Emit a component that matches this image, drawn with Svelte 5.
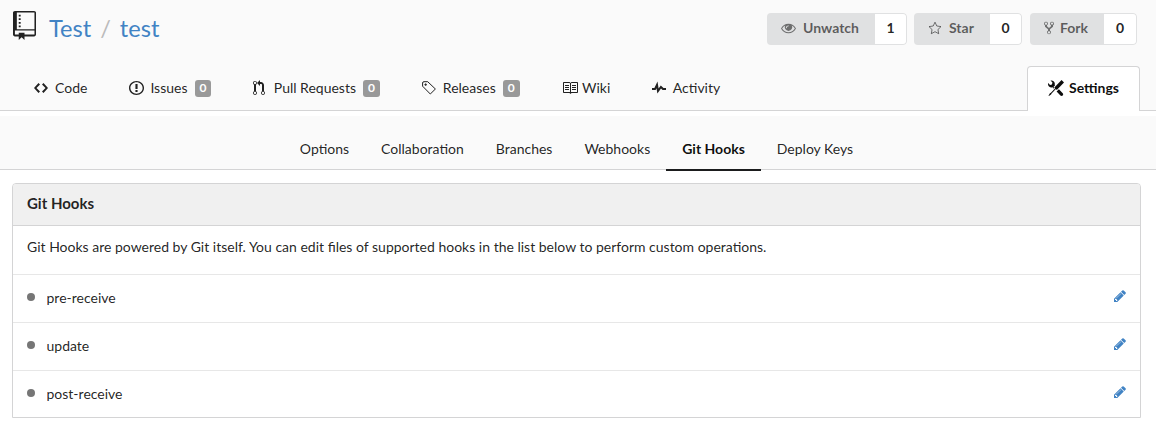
<script>
  const actions = [
    { icon: 'eye', label: 'Unwatch', count: 1, w: 140, cw: 32, iw: 22 },
    { icon: 'star', label: 'Star', count: 0, w: 108, cw: 32, iw: 21 },
    { icon: 'fork', label: 'Fork', count: 0, w: 107, cw: 33, iw: 16 }
  ];
  const tabs = [
    { icon: 'code', label: 'Code' },
    { icon: 'issue', label: 'Issues', count: 0 },
    { icon: 'pull', label: 'Pull Requests', count: 0 },
    { icon: 'tag', label: 'Releases', count: 0 },
    { icon: 'book', label: 'Wiki' },
    { icon: 'pulse', label: 'Activity' }
  ];
  const sections = ['Options', 'Collaboration', 'Branches', 'Webhooks', 'Git Hooks', 'Deploy Keys'];
  const hooks = ['pre-receive', 'update', 'post-receive'];

  const icons = {
    repo: { box: '0 0 12 16', w: 23, h: 29, d: 'M4 9H3V8h1v1zm0-3H3v1h1V6zm0-2H3v1h1V4zm0-2H3v1h1V2zm8-1v12c0 .55-.45 1-1 1H6v2l-1.500-1.500L3 16v-2H1c-.55 0-1-.45-1-1V1c0-.55.45-1 1-1h10c.55 0 1 .45 1 1zm-.8 9.800H1V13h2v-1h3v1h5.200v-2.200zM11.200.8H2V10h9.200V.8z' },
    code: { box: '0 0 14 16', w: 14, h: 16, d: 'M9.500 3L8 4.500 11.500 8 8 11.500 9.500 13 14 8 9.500 3zm-5 0L0 8l4.500 5L6 11.500 2.500 8 6 4.500 4.500 3z' },
    issue: { box: '0 0 14 16', w: 15, h: 16, d: 'M7 2.300c3.140 0 5.700 2.560 5.700 5.700s-2.560 5.700-5.700 5.700A5.710 5.710 0 0 1 1.300 8c0-3.140 2.560-5.700 5.700-5.700zM7 1C3.140 1 0 4.140 0 8s3.140 7 7 7 7-3.140 7-7-3.140-7-7-7zm1 3H6v5h2V4zm0 6H6v2h2v-2z' },
    pull: { box: '0 0 12 16', w: 12, h: 16, d: 'M11 11.280V5c-.03-.78-.34-1.470-.94-2.060C9.460 2.350 8.780 2.030 8 2H7V0L4 3l3 3V4h1c.27.02.48.11.69.31.21.2.3.42.31.69v6.280A1.993 1.993 0 0 0 10 15a1.993 1.993 0 0 0 1-3.720zm-1 2.920c-.66 0-1.200-.55-1.200-1.200 0-.65.55-1.200 1.200-1.200.65 0 1.200.55 1.200 1.200 0 .65-.55 1.200-1.200 1.200zM4 3c0-1.110-.89-2-2-2a1.993 1.993 0 0 0-1 3.720v6.560A1.993 1.993 0 0 0 2 15a1.993 1.993 0 0 0 1-3.720V4.720c.59-.34 1-.98 1-1.720zm-.8 10c0 .66-.55 1.200-1.200 1.200-.65 0-1.200-.55-1.200-1.200 0-.65.55-1.200 1.200-1.200.65 0 1.200.55 1.200 1.200zM2 4.200C1.340 4.200.8 3.650.8 3c0-.65.55-1.200 1.200-1.200.65 0 1.200.55 1.200 1.200 0 .65-.55 1.200-1.200 1.200z' },
    book: { box: '0 0 16 16', w: 16, h: 16, d: 'M3 5h4v1H3V5zm0 3h4V7H3v1zm0 2h4V9H3v1zm11-5h-4v1h4V5zm0 2h-4v1h4V7zm0 2h-4v1h4V9zm2-6v9c0 .55-.45 1-1 1H9.500l-1 1-1-1H2c-.55 0-1-.45-1-1V3c0-.55.45-1 1-1h5.500l1 1 1-1H15c.55 0 1 .45 1 1zm-8 .5L7.500 3H2v9h6V3.500zm7-.5H9.500l-.5.5V12h6V3z' },
    pulse: { box: '0 0 14 16', w: 14, h: 16, d: 'M11.500 8L8.800 5.400 6.600 8.500 5.500 1.600 2.380 8H0v2h3.600l.9-1.800.9 5.400L9 8.500l1.600 1.500H14V8h-2.500z' },
    tools: { box: '0 0 16 16', w: 16, h: 16, d: 'M4.480 7.270c.26.26 1.280 1.330 1.280 1.330l.56-.58-.88-.91 1.690-1.800s-.76-.74-.43-.45c.32-1.190.03-2.510-.87-3.440C4.930.5 3.660.2 2.520.51l1.930 2-.51 1.960-1.890.52-1.930-1.990C-.19 4.170.1 5.480 1 6.400c.94.98 2.290 1.260 3.480.87zm6.440 1.940l-2.330 2.300 3.840 3.980c.31.33.73.49 1.140.49.41 0 .82-.16 1.140-.49.63-.65.63-1.700 0-2.350l-3.790-3.930zM16 2.530L13.550 0 6.330 7.460l.88.91-4.310 4.460-.99.53-1.390 2.270.35.37 2.200-1.440.51-1.020L7.900 9.080l.88.91L16 2.530z' },
    fork: { box: '0 0 10 16', w: 10, h: 14, d: 'M8 1a1.993 1.993 0 0 0-1 3.720V6L5 8 3 6V4.720A1.993 1.993 0 0 0 2 1a1.993 1.993 0 0 0-1 3.720V6.500l3 3v1.780A1.993 1.993 0 0 0 5 15a1.993 1.993 0 0 0 1-3.720V9.500l3-3V4.720A1.993 1.993 0 0 0 8 1zM2 4.200C1.340 4.200.8 3.650.8 3c0-.65.55-1.200 1.200-1.200.65 0 1.200.55 1.200 1.200 0 .65-.55 1.200-1.200 1.200zm3 10c-.66 0-1.200-.55-1.200-1.200 0-.65.55-1.200 1.200-1.200.65 0 1.200.55 1.200 1.200 0 .65-.55 1.200-1.200 1.200zm3-10c-.66 0-1.200-.55-1.200-1.200 0-.65.55-1.200 1.200-1.200.65 0 1.200.55 1.200 1.200 0 .65-.55 1.200-1.200 1.200z' },
    eye: { box: '0 0 16 12', w: 15, h: 11, d: 'M8 .8C4.500.8 1.600 2.900 0 6c1.600 3.100 4.500 5.200 8 5.200s6.400-2.100 8-5.200C14.400 2.900 11.500.8 8 .8zm0 9.300C5.100 10.100 2.700 8.500 1.200 6 2 4.600 3.100 3.500 4.500 2.700A4 4 0 1 0 11.500 2.700C12.900 3.500 14 4.600 14.800 6 13.300 8.500 10.900 10.100 8 10.100zM8 2.600a.45.45 0 0 1 0 .9A1.900 1.900 0 0 0 6.100 5.400a.45.45 0 0 1-.9 0A2.800 2.800 0 0 1 8 2.600z' },
    star: { box: '0 0 14 14', w: 14, h: 14, line: true, d: 'M7 1.200L8.800 5l4.200.6-3.050 2.950.75 4.150L7 10.700 3.300 12.700l.75-4.150L1 5.600 5.200 5z' },
    tag: { box: '0 0 14 16', w: 14, h: 16, line: true, d: 'M.6 3V6.200L8.300 14 13.400 9 5.700 1.700H2Q.6 1.700.6 3zM3 4h1.200v1.200H3z' },
    pencil: { box: '0 0 1536 1536', w: 12, h: 12, d: 'M363 1408l91-91-235-235-91 91v107h128v128h107zm523-928q0-22-22-22-10 0-17 7l-542 542q-7 7-7 17 0 22 22 22 10 0 17-7l542-542q7-7 7-17zm-54-192l416 416-832 832h-416v-416zm683 96q0 53-37 90l-166 166-416-416 166-165q36-38 90-38 53 0 91 38l235 234q37 39 37 91z' }
  };
</script>

{#snippet icon(name)}
  {@const i = icons[name]}
  <svg class:line={i.line} class={'i-' + name} width={i.w} height={i.h} viewBox={i.box} preserveAspectRatio="none" aria-hidden="true"><path d={i.d} fill-rule={name === 'eye' ? 'evenodd' : 'nonzero'} /></svg>
{/snippet}

<div class="page">
  <header>
    <div class="top">
      <div class="crumb">
        {@render icon('repo')}
        <a href="#owner">Test</a><span class="slash">/</span><a href="#repo">test</a>
      </div>
      <div class="actions">
        {#each actions as a}
          <div class="action" style:width={a.w + 'px'}>
            <button><span class="ic" style:width={a.iw + 'px'}>{@render icon(a.icon)}</span>{a.label}</button>
            <span class="num" style:width={a.cw + 'px'}>{a.count}</span>
          </div>
        {/each}
      </div>
    </div>
    <nav class="tabs">
      {#each tabs as t}
        <a class="tab {t.icon}" href={'#' + t.icon}>
          <span class="ic">{@render icon(t.icon)}</span>{t.label}
          {#if t.count !== undefined}<span class="badge">{t.count}</span>{/if}
        </a>
      {/each}
      <a class="settings" href="#settings"><span class="ic">{@render icon('tools')}</span>Settings</a>
    </nav>
  </header>

  <nav class="sections">
    {#each sections as s}
      <a href="#section" class:active={s === 'Git Hooks'}>{s}</a>
    {/each}
  </nav>

  <main>
    <h4>Git Hooks</h4>
    <p>Git Hooks are powered by Git itself. You can edit files of supported hooks in the list below to perform custom operations.</p>
    {#each hooks as h}
      <div class="hook">
        <span class="dot"></span><span class="name">{h}</span>
        <a href="#edit" aria-label="Edit">{@render icon('pencil')}</a>
      </div>
    {/each}
  </main>
</div>

<style>
  :global(body) { background: #fff; }
  .page { width: 1156px; height: 426px; overflow: hidden; font: 14px/20px Lato, sans-serif; color: rgba(0, 0, 0, 0.87); }
  .page * { box-sizing: border-box; }
  a { color: inherit; text-decoration: none; }
  svg { display: block; fill: currentColor; flex: none; overflow: visible; }
  svg.line { fill: none; stroke: currentColor; stroke-width: 1; }
  .ic { display: flex; flex: none; align-items: center; }
  header { height: 111px; background: #fafafa; border-bottom: 1px solid #d4d4d5; }
  .top { display: flex; justify-content: space-between; height: 66px; padding: 11px 19px 0 13px; }
  .crumb { display: flex; align-items: flex-start; font-size: 23.600px; line-height: 35px; color: #4183c4; }
  .crumb svg { color: #212121; margin-right: 13px; }
  .slash { color: #bbb; padding: 0 9px; }
  .actions { display: flex; gap: 7.500px; padding-top: 2px; }
  .action { display: flex; height: 32px; border-radius: 4px; overflow: hidden; font-weight: 700; }
  .action:nth-child(2) { margin: 0 0.5px 0 -0.5px; }
  button { flex: 1; display: flex; align-items: center; border: 0; padding: 0 0 2px 14px; background: #e0e1e2; color: rgba(0, 0, 0, 0.6); font: inherit; }
  button .ic { opacity: 0.85; }
  .num { display: flex; align-items: center; justify-content: center; padding-bottom: 2px; border: 1px solid #e0e1e2; border-left: 0; border-radius: 0 4px 4px 0; background: #fff; }
  .tabs { display: flex; gap: 42px; height: 45px; padding: 0 16px 0 34px; }
  .tab { display: flex; align-items: center; padding-bottom: 2px; }
  .tab .ic { width: 21px; }
  .tab.pull { margin-left: -0.5px; }
  .tab.book .ic { width: 20.500px; }
  .tab.pulse { margin-left: -0.5px; }
  .badge { position: relative; top: 0.5px; margin-left: 7.300px; width: 16.500px; height: 17px; border-radius: 3px; background: #999; color: #fff; font-size: 12px; line-height: 16px; font-weight: 700; text-align: center; }
  .settings { display: flex; align-items: center; margin-left: auto; width: 113px; height: 45px; padding: 0 0 2px 20px; background: #fff; border: 1px solid #d4d4d5; border-bottom: 0; border-radius: 4px 4px 0 0; font-weight: 700; color: rgba(0, 0, 0, 0.95); }
  .settings .ic { width: 21px; }
  .sections { display: flex; justify-content: center; height: 54px; margin-top: 5px; padding-right: 3px; background: #fafafa; border-bottom: 1px solid #d4d4d5; }
  .sections a { height: 55px; padding: 23px 16px 0; }
  .sections .active { border-bottom: 2px solid #1b1c1d; font-weight: 700; color: rgba(0, 0, 0, 0.95); }
  main { margin: 13px 15px 0 12px; border: 1px solid #d4d4d5; border-radius: 4px 4px 0 0; }
  h4 { margin: 0; height: 42px; padding: 9px 14px; background: #f0f0f0; border-bottom: 1px solid #d4d4d5; border-radius: 3px 3px 0 0; font-size: 15px; line-height: 20px; }
  p { margin: 0; height: 48px; padding: 11px 14px; }
  .hook { display: flex; align-items: center; height: 48px; padding: 0 14px 2px; border-top: 1px solid #e7e7e7; }
  .hook:last-child { height: 47px; padding-bottom: 1px; }
  .dot { width: 8px; height: 8px; margin: 0 11.500px 1px 0; border-radius: 50%; background: #767676; }
  .hook a { margin-left: auto; padding-bottom: 4px; color: #4183c4; }
</style>
